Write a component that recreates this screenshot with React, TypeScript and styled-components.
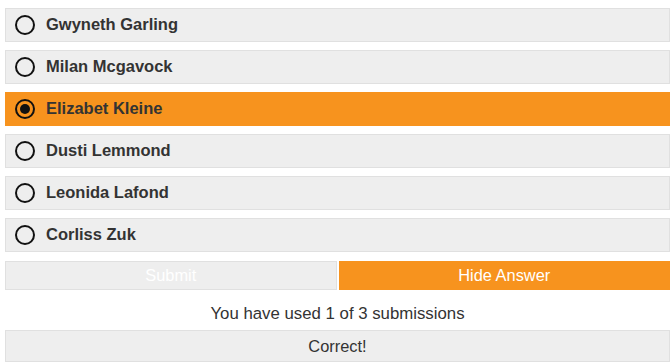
import styled, { createGlobalStyle } from "styled-components";

const GlobalStyle = createGlobalStyle`
  body {
    margin: 0;
    background: #ffffff;
    font-family: "Liberation Sans", Arial, sans-serif;
  }
`;

const Wrapper = styled.div`
  padding: 8px 1px 0 5px;
  display: flex;
  flex-direction: column;
`;

const OptionList = styled.div`
  display: flex;
  flex-direction: column;
  gap: 8px;
`;

const Option = styled.label<{ $selected?: boolean }>`
  display: flex;
  align-items: center;
  gap: 11px;
  height: 34px;
  box-sizing: border-box;
  padding-left: 9px;
  background: ${(p) => (p.$selected ? "#f7931e" : "#eeeeee")};
  border: 1px solid ${(p) => (p.$selected ? "#f7931e" : "#e0e0e0")};
  cursor: pointer;
`;

const Radio = styled.span<{ $checked?: boolean }>`
  width: 20px;
  height: 20px;
  box-sizing: border-box;
  border: 2px solid #111;
  border-radius: 50%;
  display: flex;
  align-items: center;
  justify-content: center;

  &::after {
    content: "";
    width: 10px;
    height: 10px;
    border-radius: 50%;
    background: #111;
    display: ${(p) => (p.$checked ? "block" : "none")};
  }
`;

const Name = styled.span`
  font-size: 16.5px;
  font-weight: 700;
  color: #333333;
  margin-bottom: 2px;
`;

const ButtonRow = styled.div`
  display: grid;
  grid-template-columns: 1fr 1fr;
  gap: 2px;
  margin-top: 9px;
`;

const Button = styled.button<{ $primary?: boolean }>`
  height: 29px;
  border: 1px solid ${(p) => (p.$primary ? "#f7931e" : "#e0e0e0")};
  background: ${(p) => (p.$primary ? "#f7931e" : "#eeeeee")};
  color: #ffffff;
  font-family: "Liberation Sans", Arial, sans-serif;
  font-size: 16.4px;
  cursor: ${(p) => (p.$primary ? "pointer" : "default")};
`;

const Attempts = styled.p`
  margin: 0;
  padding: 14px 0 6px;
  text-align: center;
  font-size: 16.8px;
  color: #333333;
`;

const Feedback = styled.div`
  height: 30px;
  display: flex;
  align-items: center;
  justify-content: center;
  background: #eeeeee;
  border: 1px solid #e0e0e0;
  font-size: 16.4px;
  color: #333333;
`;

const names = [
  "Gwyneth Garling",
  "Milan Mcgavock",
  "Elizabet Kleine",
  "Dusti Lemmond",
  "Leonida Lafond",
  "Corliss Zuk",
];

const App = () => {
  const selected = 2;

  return (
    <>
      <GlobalStyle />
      <Wrapper>
        <OptionList>
          {names.map((name, i) => (
            <Option key={name} $selected={i === selected}>
              <Radio $checked={i === selected} />
              <Name>{name}</Name>
            </Option>
          ))}
        </OptionList>
        <ButtonRow>
          <Button disabled>Submit</Button>
          <Button $primary>Hide Answer</Button>
        </ButtonRow>
        <Attempts>You have used 1 of 3 submissions</Attempts>
        <Feedback>Correct!</Feedback>
      </Wrapper>
    </>
  );
};

export default App;
